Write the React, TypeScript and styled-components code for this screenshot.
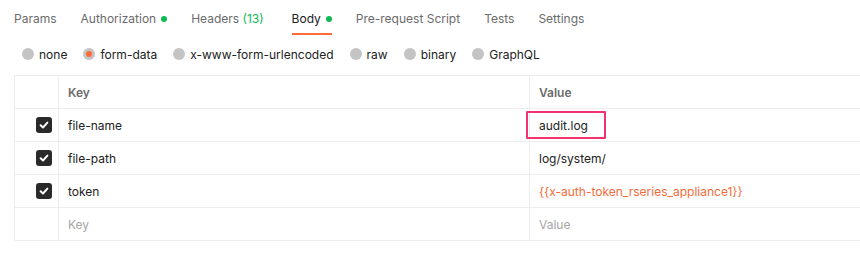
import styled, { createGlobalStyle } from "styled-components";

const GlobalStyle = createGlobalStyle`
  body {
    margin: 0;
    background: #ffffff;
    font-family: Inter, "Noto Sans", sans-serif;
    overflow: hidden;
  }
`;

const Page = styled.div`
  width: 860px;
  height: 258px;
  overflow: hidden;
`;

const TabBar = styled.div`
  display: flex;
  gap: 24px;
  height: 35px;
  padding-left: 14px;
`;

const Tab = styled.div<{ $active?: boolean }>`
  display: flex;
  align-items: center;
  gap: 5px;
  box-sizing: border-box;
  padding-top: 4px;
  height: 35px;
  font-size: 12px;
  color: ${(p) => (p.$active ? "#212121" : "#6b6b6b")};
  border-bottom: 2px solid ${(p) => (p.$active ? "#ff6c37" : "transparent")};
  white-space: nowrap;
`;

const Count = styled.span`
  color: #0cbb52;
  padding-right: 4px;
`;

const Dot = styled.span`
  width: 6px;
  height: 6px;
  border-radius: 50%;
  background: #0cbb52;
`;

const RadioRow = styled.div`
  display: flex;
  align-items: center;
  gap: 16px;
  height: 38px;
  padding: 0 0 2px 22px;
`;

const RadioOption = styled.label`
  display: flex;
  align-items: center;
  gap: 5px;
  font-size: 12px;
  color: #212121;
`;

const RadioCircle = styled.span<{ $checked?: boolean }>`
  display: flex;
  align-items: center;
  justify-content: center;
  width: 12px;
  height: 12px;
  border-radius: 50%;
  background: #c4c4c4;

  &::after {
    content: "";
    width: 6px;
    height: 6px;
    border-radius: 50%;
    background: #ff6c37;
    display: ${(p) => (p.$checked ? "block" : "none")};
  }
`;

const Table = styled.div`
  margin-left: 14px;
  width: 1000px;
  border: 1px solid #ededed;
  border-right: none;
`;

const Row = styled.div`
  display: grid;
  grid-template-columns: 44px 471px 1fr;
  height: 33px;
  box-sizing: border-box;
  border-bottom: 1px solid #ededed;

  &:last-child {
    border-bottom: none;
    height: 32px;
  }
`;

const Cell = styled.div<{ $head?: boolean; $tone?: "text" | "placeholder" | "variable" }>`
  position: relative;
  display: flex;
  align-items: center;
  padding-left: 9px;
  border-right: 1px solid #ededed;
  font-size: 12px;
  font-weight: ${(p) => (p.$head ? 600 : 400)};
  color: ${(p) =>
    p.$head
      ? "#6b6b6b"
      : p.$tone === "placeholder"
      ? "#a6a6a6"
      : p.$tone === "variable"
      ? "#f26b3a"
      : "#212121"};
  white-space: nowrap;
`;

const CheckCell = styled.div`
  display: flex;
  align-items: center;
  justify-content: flex-end;
  padding-right: 6px;
  border-right: 1px solid #ededed;
`;

const CheckBox = styled.span`
  display: flex;
  align-items: center;
  justify-content: center;
  width: 16px;
  height: 16px;
  border-radius: 3px;
  background: #2a2a2a;
`;

// annotation box drawn over the edited value
const Highlight = styled.span`
  position: absolute;
  left: -4px;
  top: 2px;
  width: 80px;
  height: 28px;
  box-sizing: border-box;
  border: 2px solid #f2336f;
  border-radius: 1px;
`;

const tabs = [
  { label: "Params" },
  { label: "Authorization", dot: true },
  { label: "Headers", count: "(13)" },
  { label: "Body", dot: true, active: true },
  { label: "Pre-request Script" },
  { label: "Tests" },
  { label: "Settings" },
];

const bodyModes = ["none", "form-data", "x-www-form-urlencoded", "raw", "binary", "GraphQL"];

const rows = [
  { key: "file-name", value: "audit.log", marked: true },
  { key: "file-path", value: "log/system/" },
  { key: "token", value: "{{x-auth-token_rseries_appliance1}}", variable: true },
];

const Check = () => (
  <svg width="10" height="10" viewBox="0 0 10 10">
    <path d="M1.6 5.2 L4 7.5 L8.4 2.6" fill="none" stroke="#fff" strokeWidth="1.9" strokeLinecap="round" strokeLinejoin="round" />
  </svg>
);

const App = () => {
  return (
    <Page>
      <GlobalStyle />
      <TabBar>
        {tabs.map((t) => (
          <Tab key={t.label} $active={t.active}>
            <span>
              {t.label}
              {t.count && <Count> {t.count}</Count>}
            </span>
            {t.dot && <Dot />}
          </Tab>
        ))}
      </TabBar>

      <RadioRow>
        {bodyModes.map((m) => (
          <RadioOption key={m}>
            <RadioCircle $checked={m === "form-data"} />
            {m}
          </RadioOption>
        ))}
      </RadioRow>

      <Table>
        <Row>
          <CheckCell />
          <Cell $head>Key</Cell>
          <Cell $head>Value</Cell>
        </Row>
        {rows.map((r) => (
          <Row key={r.key}>
            <CheckCell>
              <CheckBox>
                <Check />
              </CheckBox>
            </CheckCell>
            <Cell>{r.key}</Cell>
            <Cell $tone={r.variable ? "variable" : "text"}>
              {r.marked && <Highlight />}
              {r.value}
            </Cell>
          </Row>
        ))}
        <Row>
          <CheckCell />
          <Cell $tone="placeholder">Key</Cell>
          <Cell $tone="placeholder">Value</Cell>
        </Row>
      </Table>
    </Page>
  );
};

export default App;
